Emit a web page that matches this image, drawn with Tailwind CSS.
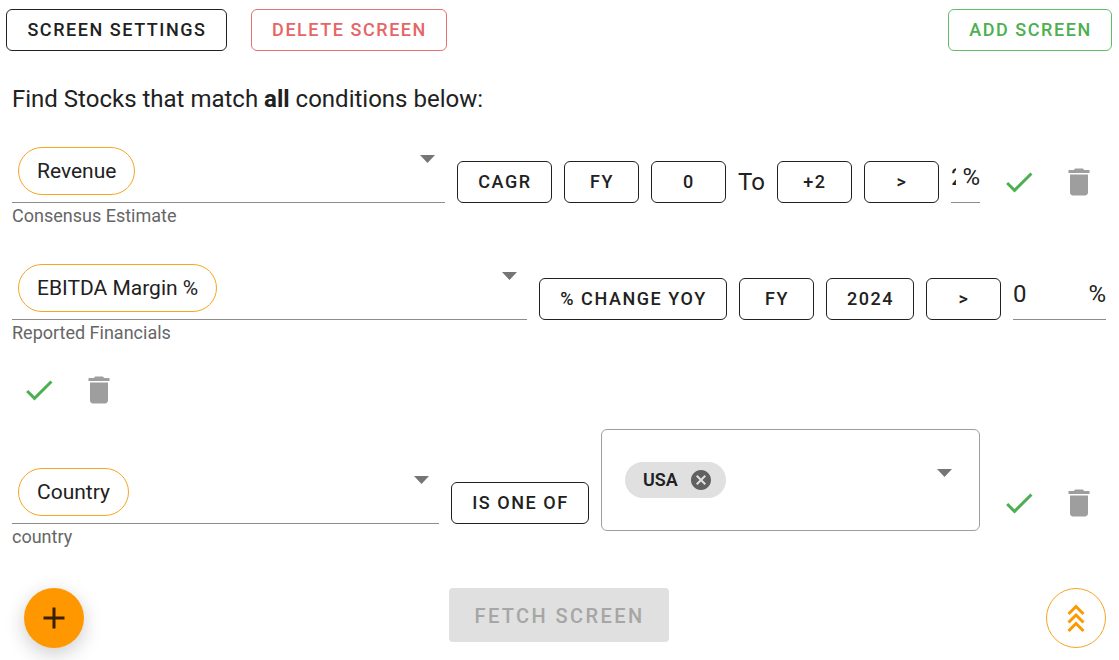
<!DOCTYPE html>
<html lang="en">
<head>
  <meta charset="UTF-8" />
  <title>Stock Screener</title>
  <script src="https://cdn.jsdelivr.net/npm/@tailwindcss/browser@4"></script>
</head>
<body class="bg-white text-[#212121] font-['Roboto',sans-serif] h-[660px] overflow-hidden relative">

  <!-- Top buttons -->
  <div class="flex pt-[9px] pl-[6px] pr-[7px]">
    <button class="w-[221px] h-[42px] pl-px border border-[#212121] rounded-md text-lg font-medium tracking-[1.55px]">SCREEN SETTINGS</button>
    <button class="w-[196px] h-[42px] pl-px ml-6 border border-[#e57373] rounded-md text-lg font-medium tracking-[1.55px] text-[#e66565]">DELETE SCREEN</button>
    <button class="w-[164px] h-[42px] pl-px ml-auto border border-[#66bb6a] rounded-md text-lg font-medium tracking-[1.55px] text-[#4caf50]">ADD SCREEN</button>
  </div>

  <p class="pl-3 mt-[33px] text-2xl leading-[30px]">Find Stocks that match <b class="font-bold">all</b> conditions below:</p>

  <!-- Condition 1 -->
  <div class="flex items-start pl-3 mt-[33px] h-[117px]">
    <div class="w-[433px]">
      <div class="relative h-[56px] border-b border-[#8c8c8c] pl-[6px]">
        <span class="inline-flex items-center h-12 px-[18px] pt-px rounded-full border border-[#f5a623] text-[21px]">Revenue</span>
        <svg class="absolute right-[10px] top-2 w-[15px] h-2" viewBox="0 0 15 8"><path d="M0 0h15L7.5 8z" fill="#757575"/></svg>
      </div>
      <div class="text-lg leading-[25px] text-[#666]">Consensus Estimate</div>
    </div>
    <div class="flex items-center mt-[14px] ml-3">
      <button class="w-[95px] h-[42px] pl-px border border-[#212121] rounded-md text-lg font-medium tracking-[1.55px]">CAGR</button>
      <button class="w-[75px] h-[42px] pl-px ml-3 border border-[#212121] rounded-md text-lg font-medium tracking-[1.55px]">FY</button>
      <button class="w-[75px] h-[42px] pl-px ml-3 border border-[#212121] rounded-md text-lg font-medium tracking-[1.55px]">0</button>
      <span class="w-[51px] text-center text-2xl">To</span>
      <button class="w-[75px] h-[42px] pl-px border border-[#212121] rounded-md text-lg font-medium tracking-[1.55px]">+2</button>
      <button class="w-[75px] h-[42px] pl-px ml-3 border border-[#212121] rounded-md text-lg font-medium tracking-[1.55px]">&gt;</button>
      <div class="w-[29px] h-[42px] ml-3 border-b border-[#8c8c8c] flex justify-between text-2xl leading-[32px]"><span class="w-[5px] overflow-hidden">2</span><span>%</span></div>
      <svg class="ml-[21px] w-9 h-9" viewBox="0 0 24 24"><path d="M9 16.17L4.83 12l-1.42 1.41L9 19 21 7l-1.41-1.41z" fill="#4caf50"/></svg>
      <svg class="ml-6 w-9 h-9" viewBox="0 0 24 24"><path d="M6 19c0 1.1.9 2 2 2h8c1.1 0 2-.9 2-2V7H6v12zM19 4h-3.5l-1-1h-5l-1 1H5v2h14V4z" fill="#9e9e9e"/></svg>
    </div>
  </div>

  <!-- Condition 2 -->
  <div class="flex items-start pl-3 h-[98px]">
    <div class="w-[515px]">
      <div class="relative h-[56px] border-b border-[#8c8c8c] pl-[6px]">
        <span class="inline-flex items-center h-12 px-[18px] pt-px rounded-full border border-[#f5a623] text-[21px]">EBITDA Margin %</span>
        <svg class="absolute right-[10px] top-2 w-[15px] h-2" viewBox="0 0 15 8"><path d="M0 0h15L7.5 8z" fill="#757575"/></svg>
      </div>
      <div class="text-lg leading-[25px] text-[#666]">Reported Financials</div>
    </div>
    <div class="flex items-center mt-[14px] ml-3">
      <button class="w-[188px] h-[42px] pl-px border border-[#212121] rounded-md text-lg font-medium tracking-[1.55px]">% CHANGE YOY</button>
      <button class="w-[75px] h-[42px] pl-px ml-3 border border-[#212121] rounded-md text-lg font-medium tracking-[1.55px]">FY</button>
      <button class="w-[88px] h-[42px] pl-px ml-3 border border-[#212121] rounded-md text-lg font-medium tracking-[1.55px]">2024</button>
      <button class="w-[75px] h-[42px] pl-px ml-3 border border-[#212121] rounded-md text-lg font-medium tracking-[1.55px]">&gt;</button>
      <div class="w-[93px] h-[42px] ml-3 border-b border-[#8c8c8c] flex justify-between text-2xl leading-[32px]"><span>0</span><span>%</span></div>
    </div>
  </div>
  <div class="flex items-center pl-[21px] h-9 mt-[10px]">
    <svg class="w-9 h-9" viewBox="0 0 24 24"><path d="M9 16.17L4.83 12l-1.42 1.41L9 19 21 7l-1.41-1.41z" fill="#4caf50"/></svg>
    <svg class="ml-6 w-9 h-9" viewBox="0 0 24 24"><path d="M6 19c0 1.1.9 2 2 2h8c1.1 0 2-.9 2-2V7H6v12zM19 4h-3.5l-1-1h-5l-1 1H5v2h14V4z" fill="#9e9e9e"/></svg>
  </div>

  <!-- Condition 3 -->
  <div class="flex items-start pl-3 mt-[21px] h-[102px]">
    <div class="w-[427px] mt-[39px]">
      <div class="relative h-[56px] border-b border-[#8c8c8c] pl-[6px]">
        <span class="inline-flex items-center h-12 px-[18px] pt-px rounded-full border border-[#f5a623] text-[21px]">Country</span>
        <svg class="absolute right-[10px] top-2 w-[15px] h-2" viewBox="0 0 15 8"><path d="M0 0h15L7.5 8z" fill="#757575"/></svg>
      </div>
      <div class="text-lg leading-[25px] text-[#666]">country</div>
    </div>
    <button class="w-[138px] h-[42px] pl-px mt-[53px] ml-3 border border-[#212121] rounded-md text-lg font-medium tracking-[1.55px]">IS ONE OF</button>
    <div class="relative w-[379px] h-[102px] ml-3 border border-[#9e9e9e] rounded-md pl-[23px] pt-[32px]">
      <span class="inline-flex items-center h-9 pl-[18px] pr-[13px] rounded-full bg-[#e0e0e0] text-lg font-semibold">USA
        <svg class="ml-[11px] w-6 h-6" viewBox="0 0 24 24"><path d="M12 2C6.47 2 2 6.47 2 12s4.47 10 10 10 10-4.47 10-10S17.53 2 12 2zm5 13.59L15.59 17 12 13.41 8.41 17 7 15.59 10.59 12 7 8.41 8.41 7 12 10.59 15.59 7 17 8.41 13.41 12 17 15.59z" fill="#616161"/></svg>
      </span>
      <svg class="absolute right-[27px] top-[39px] w-[15px] h-2" viewBox="0 0 15 8"><path d="M0 0h15L7.5 8z" fill="#757575"/></svg>
    </div>
    <svg class="mt-[56px] ml-[21px] w-9 h-9" viewBox="0 0 24 24"><path d="M9 16.17L4.83 12l-1.42 1.41L9 19 21 7l-1.41-1.41z" fill="#4caf50"/></svg>
    <svg class="mt-[56px] ml-6 w-9 h-9" viewBox="0 0 24 24"><path d="M6 19c0 1.1.9 2 2 2h8c1.1 0 2-.9 2-2V7H6v12zM19 4h-3.5l-1-1h-5l-1 1H5v2h14V4z" fill="#9e9e9e"/></svg>
  </div>

  <!-- Fetch -->
  <div class="flex justify-center mt-[57px] pr-[2px]">
    <button class="w-[220px] h-[54px] pl-[2px] pt-px rounded bg-[#e0e0e0] text-[#a6a6a6] text-xl font-medium tracking-[2.4px]">FETCH SCREEN</button>
  </div>

  <!-- Floating buttons -->
  <button class="absolute left-6 top-[588px] w-[60px] h-[60px] rounded-full bg-[#ff9800] shadow-[0_6px_20px_rgba(0,0,0,0.2)] flex items-center justify-center">
    <svg class="w-9 h-9" viewBox="0 0 24 24"><path d="M19 13h-6v6h-2v-6H5v-2h6V5h2v6h6v2z" fill="#3a2000"/></svg>
  </button>
  <button class="absolute left-[1046px] top-[588px] w-[60px] h-[60px] rounded-full border border-[#f5a623] flex items-center justify-center">
    <svg class="w-[22px] h-[30px]" viewBox="0 0 22 30"><path d="M3.500 11L11 3.500l7.500 7.500M3.500 19.500L11 12l7.500 7.500M3.500 28L11 20.500l7.500 7.500" fill="none" stroke="#ff9800" stroke-width="3"/></svg>
  </button>
</body>
</html>
